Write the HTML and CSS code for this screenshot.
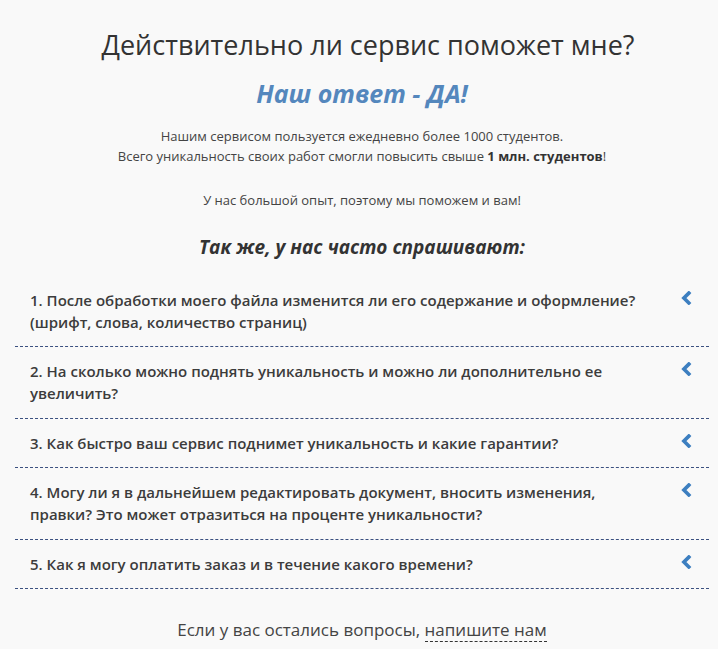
FILE: index.html
```html
<!DOCTYPE html>
<html lang="ru">
<head>
<meta charset="utf-8">
<link rel="stylesheet" href="styles.css">
</head>
<body>
<div class="page">
  <h1 class="title">Действительно ли сервис поможет мне?</h1>
  <h2 class="answer">Наш ответ - ДА!</h2>
  <p class="text">Нашим сервисом пользуется ежедневно более 1000 студентов.<br>Всего уникальность своих работ смогли повысить свыше <b>1 млн. студентов</b>!</p>
  <p class="text exp">У нас большой опыт, поэтому мы поможем и вам!</p>
  <h3 class="faq-title">Так же, у нас часто спрашивают:</h3>
  <div class="faq">
    <div class="item"><span class="q">1. После обработки моего файла изменится ли его содержание и оформление? (шрифт, слова, количество страниц)</span><svg class="chev" viewBox="0 0 10 10"><path d="M7 1.5 L3.5 5 L7 8.5" /></svg></div>
    <div class="item"><span class="q">2. На сколько можно поднять уникальность и можно ли дополнительно ее увеличить?</span><svg class="chev" viewBox="0 0 10 10"><path d="M7 1.5 L3.5 5 L7 8.5" /></svg></div>
    <div class="item"><span class="q">3. Как быстро ваш сервис поднимет уникальность и какие гарантии?</span><svg class="chev" viewBox="0 0 10 10"><path d="M7 1.5 L3.5 5 L7 8.5" /></svg></div>
    <div class="item"><span class="q">4. Могу ли я в дальнейшем редактировать документ, вносить изменения, правки? Это может отразиться на проценте уникальности?</span><svg class="chev" viewBox="0 0 10 10"><path d="M7 1.5 L3.5 5 L7 8.5" /></svg></div>
    <div class="item"><span class="q">5. Как я могу оплатить заказ и в течение какого времени?</span><svg class="chev" viewBox="0 0 10 10"><path d="M7 1.5 L3.5 5 L7 8.5" /></svg></div>
  </div>
  <p class="footer">Если у вас остались вопросы, <a class="link">напишите нам</a></p>
</div>
</body>
</html>
```
FILE: styles.css
```css
html, body { margin: 0; padding: 0; }
body {
  background: #f9f9f9;
  font-family: "Open Sans", "Liberation Sans", sans-serif;
  color: #333;
}
.page { padding: 0 9px 0 15px; }
.title {
  margin: 0;
  padding: 27px 0 0 12px;
  font-size: 27px;
  font-weight: 400;
  line-height: 36px;
  text-align: center;
  color: #333;
}
.answer {
  margin: 12px 0 0;
  font-size: 25px;
  font-weight: 700;
  font-style: italic;
  line-height: 36px;
  text-align: center;
  color: #5487bd;
}
.text {
  margin: 15px 0 0;
  font-size: 13px;
  line-height: 20px;
  text-align: center;
  color: #444;
}
.text b { color: #333; }
.exp { margin-top: 24px; }
.faq-title {
  margin: 23px 0 0;
  font-size: 19px;
  font-weight: 700;
  font-style: italic;
  line-height: 28px;
  text-align: center;
  color: #333;
}
.faq { margin-top: 14.5px; }
.item {
  display: flex;
  align-items: flex-start;
  justify-content: space-between;
  padding: 13px 16px 13.5px 15px;
  border-bottom: 1px dashed #3b5080;
}
.q {
  font-size: 15px;
  font-weight: 600;
  line-height: 22px;
  color: #3c3c3c;
  max-width: 620px;
}
.chev {
  width: 14px;
  height: 14px;
  margin-top: 2px;
  flex: none;
}
.chev path {
  fill: none;
  stroke: #3d7fc0;
  stroke-width: 2.6;
  stroke-linecap: square;
}
.footer {
  margin: 29px 0 0;
  font-size: 17px;
  line-height: 24px;
  text-align: center;
  color: #444;
}
.link {
  color: #444;
  text-decoration: none;
  border-bottom: 1px dashed #333;
}
```
